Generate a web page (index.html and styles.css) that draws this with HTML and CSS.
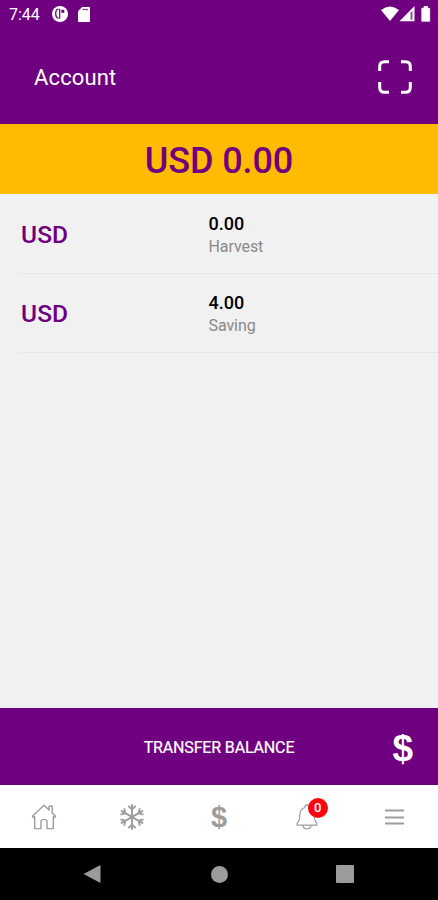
FILE: index.html
```html
<!DOCTYPE html>
<html lang="en">
<head>
<meta charset="utf-8">
<title>Account</title>
<link rel="stylesheet" href="styles.css">
</head>
<body>
<div class="app">
  <header class="top">
    <div class="status">
      <span class="clock">7:44</span>
      <svg class="status-app" width="16" height="16" viewBox="0 0 16 16"><circle cx="8" cy="8" r="8" fill="#fff"/><path d="M6.500 3.200Q3.700 3.500 3.700 7.500T6.500 12.500" stroke="#6f007f" stroke-width="1.300" fill="none"/><path d="M7.700 2.800v10" stroke="#6f007f" stroke-width="1.200"/><path d="M9.300 3.800h3v3h-3z" fill="#6f007f"/></svg>
      <svg class="status-card" width="12" height="15" viewBox="0 0 12 15"><path d="M4.200 0H11q1 0 1 1v13q0 1-1 1H1q-1 0-1-1V4.200z" fill="#fff"/><path d="M4.500 2.500h5.500" stroke="#6f007f" stroke-width="1.300" opacity=".75"/></svg>
      <svg class="status-right" width="50" height="16" viewBox="0 0 50 16"><path d="M0 4.100Q9-3.200 18 4.100L9 15z" fill="#fff"/><path d="M18.500 15.300L33.500 0v15.300z" fill="#fff"/><path d="M29.500 6.500v7.300h2V5z" fill="#6f007f" opacity=".7"/><path d="M40.800 2.300H43V.5h3.500v1.800h2.200v12.900h-7.900z" fill="#fff" stroke="#fff" stroke-width=".8" stroke-linejoin="round"/></svg>
    </div>
    <div class="titlebar">
      <h1>Account</h1>
      <svg width="34" height="34" viewBox="0 0 34 34" fill="none" stroke="#fff" stroke-width="3"><path d="M1.700 11V6.500Q1.700 1.700 6.500 1.700H11M23 1.700h4.500q4.800 0 4.800 4.800V11M32.300 22v5.500q0 4.800-4.800 4.800H23M11 32.300H6.500q-4.800 0-4.800-4.800V22"/></svg>
    </div>
  </header>
  <div class="total">USD 0.00</div>
  <main class="accounts">
    <div class="row">
      <div class="currency">USD</div>
      <div class="detail"><div class="amount">0.00</div><div class="kind">Harvest</div></div>
    </div>
    <div class="row">
      <div class="currency">USD</div>
      <div class="detail"><div class="amount">4.00</div><div class="kind">Saving</div></div>
    </div>
  </main>
  <div class="transfer"><span class="label">TRANSFER BALANCE</span><span class="dollar">$</span></div>
  <nav class="tabs">
    <div class="tab"><svg width="26" height="26" viewBox="0 0 26 26" fill="none" stroke="#9d9d9d" stroke-width="1.400" stroke-linejoin="round"><path d="M1.400 12.300L13 1.300l5 4.600V2.300h3.200v6.600l3.400 3.400-1 1.300-1.300-1v12h-6.300v-7q0-2-2-2h-2q-2 0-2 2v7H3.700v-12l-1.300 1z"/></svg></div>
    <div class="tab snow"><svg width="26" height="26" viewBox="-13 -13 26 26" fill="none" stroke="#9d9d9d" stroke-width="1.900"><g id="arm"><path d="M0-12.800V12.800M-3.700-11.200L0-7.500l3.700-3.700M-3.700 11.200L0 7.500l3.700 3.700"/></g><use href="#arm" transform="rotate(60)"/><use href="#arm" transform="rotate(120)"/></svg></div>
    <div class="tab"><span class="tab-dollar">$</span></div>
    <div class="tab"><div class="bell"><svg width="22" height="26" viewBox="0 0 22 26" fill="none" stroke="#9d9d9d" stroke-width="1.200"><path d="M9 3.500V2q2-2 4 0v1.500Q18 5 18.200 11q.1 6 2.600 8.300v1.900H1.200v-1.900q2.500-2.300 2.600-8.300Q4 5 9 3.500M6.900 21.200q.5 3.800 4.100 3.800t4.100-3.800"/></svg><span class="badge">0</span></div></div>
    <div class="tab"><svg width="19" height="16" viewBox="0 0 19 16"><path d="M0 1.500h19M0 8.500h19M0 14.500h19" stroke="#9d9d9d" stroke-width="2.200"/></svg></div>
  </nav>
  <div class="system">
    <svg width="17" height="18" viewBox="0 0 17 18"><path d="M.5 9L16 .7v16.600z" fill="#9b9b9b" stroke="#9b9b9b" stroke-linejoin="round"/></svg>
    <span class="circle"></span>
    <span class="square"></span>
  </div>
</div>
</body>
</html>
```
FILE: styles.css
```css
* { box-sizing: border-box; }
body { margin: 0; font-family: Roboto, sans-serif; }
.app { width: 438px; height: 900px; display: flex; flex-direction: column; background: #f1f1f1; overflow: hidden; }
.top { height: 124px; background: #6f007f; color: #fff; }
.status { height: 30px; display: flex; align-items: center; padding: 0 7px 2px 9px; }
.clock { width: 43px; font-size: 16px; line-height: 20px; padding-top: 1px; }
.status-card { margin-left: 10px; }
.status-right { margin-left: auto; }
.titlebar { height: 94px; display: flex; align-items: center; justify-content: space-between; padding: 0 26px 1px 34px; }
h1 { margin: 0; font-size: 22px; font-weight: 400; letter-spacing: .15px; padding-top: 1px; }
.total { height: 70px; background: #ffba02; color: #6f007f; font-size: 36px; font-weight: 500; line-height: 75px; letter-spacing: -.1px; text-align: center; }
.accounts { flex: 1; }
.row { height: 79.500px; margin-left: 19px; padding-left: 2px; display: grid; grid-template-columns: 187.500px 1fr; border-bottom: 1px solid #e7e7e7; align-items: center; }
.currency { color: #6f007f; font-size: 24.500px; font-weight: 500; letter-spacing: .1px; padding-top: 1.500px; }
.detail { padding-top: 2px; }
.amount { font-size: 18px; line-height: 22px; font-weight: 500; color: #000; padding-top: 2px; }
.kind { font-size: 16px; line-height: 22px; color: #898989; letter-spacing: -.08px; padding-top: 1px; }
.transfer { height: 77px; display: grid; grid-template-columns: 1fr auto 1fr; align-items: center; background: #6f007f; color: #fff; padding: 2px 25px 0; }
.label { grid-column: 2; font-size: 16px; letter-spacing: -.15px; -webkit-text-stroke: .2px #fff; }
.dollar { justify-self: end; font: bold 37px/40px "Liberation Sans", sans-serif; padding-top: 2px; }
.tabs { height: 63px; display: grid; grid-template-columns: repeat(5, 1fr); background: #fff; }
.tab { display: flex; align-items: center; justify-content: center; }
.snow { padding-left: 1px; }
.tab-dollar { color: #9d9d9d; font: bold 29px/32px "Liberation Sans", sans-serif; }
.bell { position: relative; height: 26px; }
.badge { position: absolute; left: 12px; top: -6px; width: 20px; height: 20px; border-radius: 50%; background: #f90510; color: #fff; font-size: 13px; font-weight: 500; line-height: 20px; text-align: center; }
.system { height: 52px; display: flex; align-items: center; justify-content: space-between; padding: 0 84px; background: #000; }
.circle { width: 17px; height: 17px; margin-left: 1px; border-radius: 50%; background: #9b9b9b; }
.square { width: 18px; height: 18px; border-radius: 1px; background: #9b9b9b; }
```
